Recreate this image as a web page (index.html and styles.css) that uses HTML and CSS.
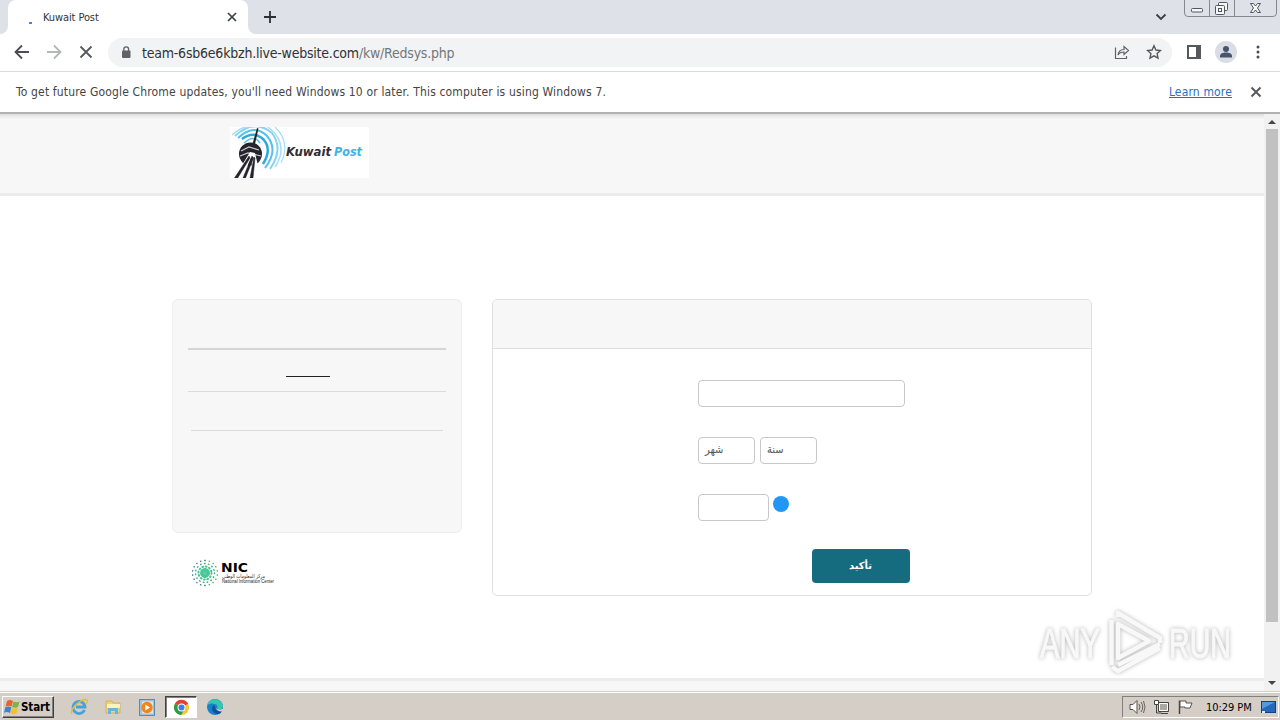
FILE: index.html
```html
<!DOCTYPE html>
<html lang="en">
<head>
    <meta charset="UTF-8">
    <title>Kuwait Post</title>
    <link rel="stylesheet" href="styles.css">
</head>
<body>
    <div class="tabbar">
        <div class="tab-edge"></div>
        <div class="tab">
            <span class="spinner"></span>
            <span class="tab-title">Kuwait Post</span>
            <svg class="tab-close" width="10" height="10" viewBox="0 0 10 10"><path d="M1 1l8 8M9 1l-8 8" stroke="#3c4043" stroke-width="1.7"/></svg>
        </div>
        <div class="tab-rest">
            <svg width="12" height="12" viewBox="0 0 12 12"><path d="M6 0v12M0 6h12" stroke="#2c3036" stroke-width="1.8"/></svg>
            <svg class="tab-menu" width="12" height="8" viewBox="0 0 12 8"><path d="M1.500 1.500L6 6l4.500-4.500" fill="none" stroke="#3c4043" stroke-width="1.800"/></svg>
            <svg class="win-buttons" width="94" height="18" viewBox="0 0 94 18">
                <path d="M.5 0v13q0 3.500 3.500 3.500h85q3.500 0 3.500-3.500V0M25.500 0v16M50.500 0v16" fill="none" stroke="#85888e"/>
                <g fill="#f5f6f8" stroke="#53565c">
                    <rect x="7.500" y="8.500" width="11" height="3.500" rx="1"/>
                    <rect x="34.500" y="2.500" width="9" height="8" rx="1"/>
                    <rect x="31.500" y="5.500" width="9" height="9" rx="1"/>
                    <rect x="34.500" y="8.500" width="3" height="3"/>
                    <path d="M66.500 3.500h3l2 2.500 2-2.500h3l-3 4.500 3 4.500h-3l-2-2.500-2 2.500h-3l3-4.500z"/>
                </g>
            </svg>
        </div>
    </div>

    <div class="toolbar">
        <svg class="nav-icon" width="16" height="16" viewBox="0 0 16 16"><path d="M15 8H2M8 1.500L1.500 8 8 14.500" fill="none" stroke="#4a4d51" stroke-width="1.800"/></svg>
        <svg class="nav-icon" width="16" height="16" viewBox="0 0 16 16"><path d="M1 8h13M8 1.500L14.500 8 8 14.500" fill="none" stroke="#b4b6b9" stroke-width="1.800"/></svg>
        <svg class="nav-icon" width="16" height="16" viewBox="0 0 16 16"><path d="M2.500 2.500l11 11M13.500 2.500l-11 11" stroke="#55585c" stroke-width="1.800"/></svg>
        <div class="address">
            <svg width="10" height="13" viewBox="0 0 10 13"><rect x="1" y="4.500" width="8.500" height="7.500" rx="1" fill="#5f6368"/><path d="M2.800 5V3.200a2.400 2.400 0 0 1 4.800 0V5" fill="none" stroke="#5f6368" stroke-width="1.300"/></svg>
            <span class="url">team-6sb6e6kbzh.live-website.com<span class="path">/kw/Redsys.php</span></span>
            <svg class="share" width="16" height="16" viewBox="0 0 16 16" fill="none" stroke="#5f6368" stroke-width="1.200"><path d="M1.500 3.500v11h11V12"/><path d="M4 11c.5-4 3-5.500 6-5.500V2.500l4.500 4-4.500 4V8C7.500 8 5.500 8.500 4 11z"/></svg>
            <svg width="16" height="16" viewBox="0 0 16 16"><path d="M8 1.800l1.900 4.200 4.600.5-3.400 3.100.9 4.500L8 11.800l-4 2.300.9-4.500L1.500 6.500l4.600-.5z" fill="none" stroke="#55585c" stroke-width="1.400"/></svg>
        </div>
        <svg class="side-panel" width="14" height="14" viewBox="0 0 14 14"><rect x="1" y="1" width="12" height="12" fill="#fff" stroke="#55585c" stroke-width="2"/><path d="M9 1h4v12H9z" fill="#55585c"/></svg>
        <svg class="avatar" width="22" height="22" viewBox="0 0 22 22"><circle cx="11" cy="11" r="11" fill="#dadde3"/><circle cx="11" cy="8" r="3" fill="#48546d"/><path d="M5 16.500v-1.500c0-2.500 3-3.500 6-3.500s6 1 6 3.500v1.500z" fill="#48546d"/></svg>
        <svg class="dots" width="4" height="14" viewBox="0 0 4 14" fill="#4a4d51"><circle cx="2" cy="2" r="1.500"/><circle cx="2" cy="7" r="1.500"/><circle cx="2" cy="12" r="1.500"/></svg>
    </div>

    <div class="infobar">
        <span class="info-text">To get future Google Chrome updates, you'll need Windows 10 or later. This computer is using Windows 7.</span>
        <a class="learn" href="#">Learn more</a>
        <svg width="12" height="12" viewBox="0 0 12 12"><path d="M1.500 1.500l9 9M10.500 1.500l-9 9" stroke="#55585c" stroke-width="1.900"/></svg>
    </div>

    <div class="viewport">
        <div class="page">
            <header class="site-header">
                <svg class="logo" width="139" height="51" viewBox="0 0 139 51">
                    <rect width="139" height="51" fill="#fff"/>
                    <g fill="none" stroke="#58bfea">
                        <path d="M12 12Q24 3 34 13Q42 23 33 37" stroke-width="2.500" stroke="#2fa9dd"/>
                        <path d="M8 11Q24-4 37 9Q49 23 35 41" stroke-width="2"/>
                        <path d="M5 9Q24-9 42 6Q54 22 40 42" stroke-width="2" stroke="#85d2f1"/>
                        <path d="M2 8Q12-1 19 0M38 0Q60 17 45 40" stroke-width="1.500" stroke="#a8def4"/>
                        <path d="M45 0Q61 15 51 36" stroke-width="1.200" stroke="#a8def4"/>
                        <path d="M14 16Q24 7 30 16" stroke-width="1.500"/>
                    </g>
                    <path d="M27 1l1.500.5L25 17h-2.500z" fill="#222"/>
                    <ellipse cx="20.500" cy="27" rx="11.500" ry="11.500" fill="#25232b"/>
                    <path d="M11 24l8-4 10 3M10 29l8-3 13 3" fill="none" stroke="#c9c9cf" stroke-width="1.200"/>
                    <path d="M20 25L4 51h8l9-20 2 20h8L25 26z" fill="#fff"/>
                    <path d="M19 29L4.500 51h3.200L20 31zM22 29l-9 22h2.500L23.500 31zM24 30l-4 21h3l2-20z" fill="#25232b" stroke="#25232b" stroke-width=".5"/>
                    <text class="logo-text" x="56" y="29" textLength="45" lengthAdjust="spacingAndGlyphs" fill="#302d35">Kuwait</text>
                    <text class="logo-text" x="104" y="29" textLength="28" lengthAdjust="spacingAndGlyphs" fill="#3ab5e6">Post</text>
                </svg>
            </header>

            <main class="content">
                <div class="side">
                    <div class="summary">
                        <hr class="rule thick">
                        <hr class="rule dark">
                        <hr class="rule">
                        <hr class="rule inset">
                    </div>
                    <svg class="nic" width="86" height="32" viewBox="0 0 86 32">
                        <g fill="none" stroke-linecap="round">
                            <circle cx="15" cy="16" r="3.500" fill="#58cda0" stroke="#45c79b" stroke-width="3" stroke-dasharray="1.500 1.500"/>
                            <circle cx="15" cy="16" r="6.500" stroke="#48c391" stroke-width="2" stroke-dasharray=".8 2.600"/>
                            <circle cx="15" cy="16" r="9.500" stroke="#44ad83" stroke-width="1.500" stroke-dasharray=".5 3.500"/>
                            <path d="M15 3.500a12.500 12.500 0 0 0 0 25" stroke="#3c7c98" stroke-width="1.400" stroke-dasharray=".3 4"/>
                            <path d="M15 3.500a12.500 12.500 0 0 1 0 25" stroke="#59ad55" stroke-width="1.400" stroke-dasharray=".3 4"/>
                        </g>
                        <text class="nic-name" x="31" y="15" textLength="27" lengthAdjust="spacingAndGlyphs">NIC</text>
                        <text class="nic-ar" x="32" y="21" textLength="43" lengthAdjust="spacingAndGlyphs">مركز المعلومات الوطني</text>
                        <text class="nic-en" x="32" y="26" textLength="52" lengthAdjust="spacingAndGlyphs">National Information Center</text>
                    </svg>
                </div>

                <div class="card">
                    <div class="card-head"></div>
                    <div class="fields">
                        <div class="row"><div class="field long"></div></div>
                        <div class="row">
                            <div class="field short">شهر</div>
                            <div class="field short">سنة</div>
                        </div>
                        <div class="row">
                            <div class="field code"></div>
                            <span class="hint"></span>
                        </div>
                        <button type="button" class="confirm">تأكيد</button>
                    </div>
                </div>
            </main>

            <footer class="site-footer"></footer>
        </div>
        <div class="scrollbar">
            <div class="arrow up"></div>
            <div class="thumb"></div>
            <div class="arrow down"></div>
        </div>
    </div>

    <div class="taskbar">
        <div class="start">
            <svg width="17" height="16" viewBox="0 0 17 16">
                <path d="M3 2q3-2 6 0L7.500 7.500q-3-1.500-6 0z" fill="#e8642a"/>
                <path d="M9.500 2.500q3 1.500 6 0L14 8q-3 1.500-6 0z" fill="#7ab642"/>
                <path d="M1.300 8.300q3-1.500 6 0L6 14q-3-2-6 0z" fill="#3f83c9"/>
                <path d="M8 8.800q3 1.500 6 0L12.500 14.500q-3 1.500-6 0z" fill="#f4bf2e"/>
            </svg>
            <span>Start</span>
        </div>
        <div class="launch">
            <div class="app"><svg width="18" height="18" viewBox="0 0 18 18"><path d="M14.500 12a6 6 0 1 1 .5-3H6" fill="none" stroke="#42a4db" stroke-width="2.800"/><path d="M2 16C-1 12 12-1 17 2q1 1-1 4" fill="none" stroke="#e9b93b" stroke-width="1.400"/></svg></div>
            <div class="app"><svg width="18" height="18" viewBox="0 0 18 18"><path d="M2 3h6l1 2h7v10H2z" fill="#eed27a" stroke="#c9a64b" stroke-width=".7"/><path d="M3 6h13v4H3z" fill="#fff3b8"/><path d="M4 16v-6h10v6h-3v-3H7v3z" fill="#69b3dc"/></svg></div>
            <div class="app"><svg width="16" height="17" viewBox="0 0 16 17"><rect x=".5" y=".5" width="15" height="16" fill="#9fc3df" stroke="#568bb7"/><rect x="3" y="2.500" width="11" height="12" fill="#d9e8f3"/><circle cx="8" cy="8.500" r="5.700" fill="#f0851b"/><path d="M6.300 5.500v6l4.700-3z" fill="#fff"/></svg></div>
            <div class="app active"><svg width="17" height="17" viewBox="0 0 18 18"><circle cx="9" cy="9" r="8" fill="#f5c62e"/><path d="M9 9L2 5a8 8 0 0 1 14 0z" fill="#df4234"/><path d="M9 9L2.100 5A8 8 0 0 0 8.500 17l3.500-6z" fill="#299b4b"/><circle cx="9" cy="9" r="4.200" fill="#fff"/><circle cx="9" cy="9" r="3.200" fill="#3d7ee8"/></svg></div>
            <div class="app"><svg width="18" height="18" viewBox="0 0 18 18"><circle cx="9" cy="9" r="8" fill="#1680ca"/><path d="M1 8C2-1 16-1 17 8c0 4-5 4-6 2 1-2 0-4-3-4-3-1-6 0-7 2z" fill="#35c6ae"/><path d="M8 7c-4 3-1 9 4 9 2 0 3-1 4-3-4 1-7-1-7-4z" fill="#124f99"/><path d="M10 8.500q0 4 7 2.500l1 2-2 .5q-6 0-6-5z" fill="#d5cec6"/></svg></div>
        </div>
        <div class="tray">
            <svg width="17" height="16" viewBox="0 0 17 16"><path d="M1 5.500h3l4-4v13l-4-4H1z" fill="#fff" stroke="#55534f"/><path d="M10 5q2 3 0 6M12 3q3.500 5 0 10M14.500 2q3 6 0 12" fill="none" stroke="#66645f"/></svg>
            <svg width="17" height="16" viewBox="0 0 17 16"><path d="M5.500 3.500h10v9h-10z" fill="#aaa8a3" stroke="#444"/><path d="M6.500 4.500h8v7h-8z" fill="none" stroke="#fff"/><path d="M8 14.500h7M3.500 6v8h5" fill="none" stroke="#444"/><path d="M1.500 1.500h4v4h-4z" fill="#fff" stroke="#444"/></svg>
            <svg width="17" height="16" viewBox="0 0 17 16"><path d="M2.500 15V1.500" stroke="#444" stroke-width="1.500"/><path d="M3 2h6v2h6l-2 5H8V8H3z" fill="#fff" stroke="#55534f"/></svg>
            <span class="clock">10:29 PM</span>
            <svg width="15" height="13" viewBox="0 0 15 13"><rect x=".5" y=".5" width="14" height="11" fill="#2467bb" stroke="#173f7c"/><path d="M1 1h13L1 8z" fill="#5799dc"/><path d="M1 10h3v2H1z" fill="#dce9f5"/></svg>
        </div>
    </div>

    <svg class="watermark" width="220" height="80" viewBox="0 0 220 80">
        <g class="mark-shadow">
            <text class="mark" x="6" y="52" textLength="60" lengthAdjust="spacingAndGlyphs">ANY</text>
            <text class="mark" x="135" y="52" textLength="62" lengthAdjust="spacingAndGlyphs">RUN</text>
            <path class="play" d="M84 18v34l31-17zM77.500 14v45M84 11V7l42 25v5M84 59l42-21M78 61l6 4 42-23"/>
        </g>
    </svg>
</body>
</html>
```
FILE: styles.css
```css
* {
    box-sizing: border-box;
}

body {
    margin: 0;
    width: 1280px;
    height: 720px;
    overflow: hidden;
    display: flex;
    flex-direction: column;
    background: #fff;
    font-family: "DejaVu Sans Condensed", "DejaVu Sans", sans-serif;
    color: #333;
}

svg {
    display: block;
    flex: none;
}

/* browser window */
.tabbar {
    height: 34px;
    flex: none;
    display: flex;
    background: #fff;
}

.tab-edge {
    width: 8px;
    background: #dee1e8;
    border-bottom-right-radius: 8px;
}

.tab {
    width: 240px;
    display: flex;
    align-items: center;
    padding: 0 11px 0 21px;
    background: linear-gradient(#dee1e8, #dee1e8) top / 100% 10px no-repeat;
    position: relative;
    z-index: 0;
}

.tab::before {
    content: "";
    position: absolute;
    inset: 0;
    z-index: -1;
    background: #fff;
    border-radius: 8px 8px 0 0;
}

.spinner {
    width: 3px;
    height: 2px;
    margin-top: 12px;
    background: #4a80e0;
}

.tab-title {
    margin-left: 11px;
    font-size: 11px;
    letter-spacing: -0.1px;
}

.tab-close {
    margin-left: auto;
}

.tab-rest {
    flex: 1;
    display: flex;
    align-items: center;
    padding: 0 2px 0 16px;
    background: #dee1e8;
    border-bottom-left-radius: 8px;
}

.tab-menu {
    margin-left: auto;
    margin-right: 17px;
}

.win-buttons {
    align-self: flex-start;
}

.toolbar {
    height: 38px;
    flex: none;
    display: flex;
    align-items: center;
    padding: 0 20px 1px 14px;
    border-bottom: 1px solid #d8dadc;
}

.nav-icon {
    margin-right: 16px;
}

.address {
    width: 1064px;
    height: 29px;
    margin-left: -2px;
    display: flex;
    align-items: center;
    padding: 0 10px 0 13px;
    border-radius: 15px;
    background: #f1f3f4;
}

.url {
    margin: 1px 0 0 11px;
    font-size: 14px;
    letter-spacing: -0.22px;
    color: #303236;
}

.path {
    color: #74777b;
}

.share {
    margin-left: auto;
    margin-right: 16px;
}

.side-panel {
    margin-left: 15px;
}

.avatar {
    margin-left: 14px;
}

.dots {
    margin-left: 19px;
}

.infobar {
    height: 42px;
    flex: none;
    display: flex;
    align-items: center;
    padding: 0 18px 0 16px;
    font-size: 12px;
    letter-spacing: 0.16px;
    color: #444;
    border-bottom: 2px solid #b0b2b2;
}

.learn {
    margin-left: auto;
    margin-right: 18px;
    color: #2a6fbd;
}

/* web page */
.viewport {
    height: 577px;
    flex: none;
    display: flex;
}

.page {
    flex: 1;
    display: flex;
    flex-direction: column;
}

.site-header {
    height: 82px;
    padding: 13px 0 0 230px;
    background: linear-gradient(#dedede, #f7f7f7 5px);
    border-bottom: 3px solid #ebebeb;
}

.logo-text {
    font: italic bold 13px "DejaVu Sans", sans-serif;
}

.content {
    flex: 1;
    display: flex;
    align-items: flex-start;
    gap: 30px;
    padding: 103px 172px 0;
}

.summary {
    width: 290px;
    height: 234px;
    padding: 48px 15px 0;
    background: #f7f7f7;
    border: 1px solid #eee;
    border-radius: 6px;
}

.rule {
    height: 1px;
    margin: 0;
    border: none;
    background: #dbdbdb;
}

.rule.thick {
    height: 2px;
    background: #d5d5d5;
}

.rule.dark {
    width: 44px;
    margin: 26px auto 14px 98px;
    background: #222;
}

.rule.inset {
    margin: 38px 3px 0;
}

.nic {
    margin: 24px 0 0 18px;
}

.nic-name {
    font: bold 13px "DejaVu Sans", sans-serif;
}

.nic-ar {
    font: 5.5px "DejaVu Sans", sans-serif;
    fill: #333;
}

.nic-en {
    font: 4.5px "Liberation Sans", sans-serif;
    fill: #222;
}

.card {
    width: 600px;
    height: 297px;
    border: 1px solid #e0e0e0;
    border-radius: 5px;
}

.card-head {
    height: 49px;
    background: #f7f7f7;
    border-bottom: 1px solid #dedede;
    border-radius: 4px 4px 0 0;
}

.fields {
    display: flex;
    flex-direction: column;
    padding: 31px 181px 0 205px;
}

.row {
    display: flex;
    gap: 5px;
    margin-bottom: 30px;
}

.field {
    height: 27px;
    padding: 5px 6px;
    border: 1px solid #c8c8c8;
    border-radius: 4px;
    font-size: 11px;
    line-height: 13px;
    color: #555;
}

.field.long {
    width: 207px;
}

.field.short {
    width: 57px;
}

.field.code {
    width: 71px;
}

.hint {
    width: 16px;
    height: 16px;
    margin: 2px 0 0 -1px;
    border-radius: 50%;
    background: #2196f3;
}

.confirm {
    width: 98px;
    height: 34px;
    margin: -2px 0 0 114px;
    padding: 0 1px 2px 0;
    border: none;
    border-radius: 4px;
    background: #146c7e;
    color: #fff;
    font: bold 10px "DejaVu Sans", sans-serif;
}

.site-footer {
    height: 13px;
    background: #f7f7f7;
    border-top: 3px solid #ececec;
}

.scrollbar {
    width: 16px;
    display: flex;
    flex-direction: column;
    align-items: center;
    padding: 6px 0;
    background: #f1f1f1;
}

.arrow {
    border: 4px solid transparent;
}

.arrow.up {
    border-top: none;
    border-bottom-color: #444;
}

.arrow.down {
    margin-top: auto;
    border-bottom: none;
    border-top-color: #444;
}

.thumb {
    width: 12px;
    height: 493px;
    margin-top: 5px;
    background: #c1c1c1;
}

/* desktop taskbar */
.taskbar {
    height: 29px;
    flex: none;
    display: flex;
    align-items: center;
    padding: 2px 1px 0 2px;
    background: #d5cec6;
    border-top: 1px solid #d5cec6;
    box-shadow: inset 0 1px #fff;
    color: #000;
}

.start {
    width: 52px;
    height: 22px;
    display: flex;
    align-items: center;
    padding-left: 1px;
    border: 1px solid;
    border-color: #fff #404040 #404040 #fff;
    box-shadow: inset -1px -1px #808080;
    font-size: 11.5px;
    font-weight: bold;
    letter-spacing: -0.1px;
}

.launch {
    display: flex;
    gap: 2px;
    margin-left: 9px;
}

.app {
    width: 32px;
    height: 22px;
    display: flex;
    align-items: center;
    justify-content: center;
}

.app.active {
    background: #fff;
    border: 1px solid;
    border-color: #404040 #fff #fff #404040;
    box-shadow: inset 1px 1px #808080;
}

.tray {
    width: 157px;
    height: 22px;
    margin-left: auto;
    display: flex;
    align-items: center;
    gap: 7px;
    padding: 0 2px 0 6px;
    border: 1px solid;
    border-color: #808080 #fff #fff #808080;
}

.clock {
    margin: 0 auto 0 5px;
    font-size: 11px;
    letter-spacing: -0.05px;
    white-space: nowrap;
}

/* watermark lies over the desktop */
.watermark {
    position: absolute;
    left: 1034px;
    top: 606px;
}

.mark-shadow {
    filter: drop-shadow(0 0 2px #b4b4b4);
}

.mark {
    font: 43px "Liberation Sans", sans-serif;
    fill: #f8f8f8;
    stroke: #f8f8f8;
    stroke-width: 1.2;
}

.play {
    fill: none;
    stroke: #f8f8f8;
    stroke-width: 4.5;
    stroke-linejoin: round;
}
```
